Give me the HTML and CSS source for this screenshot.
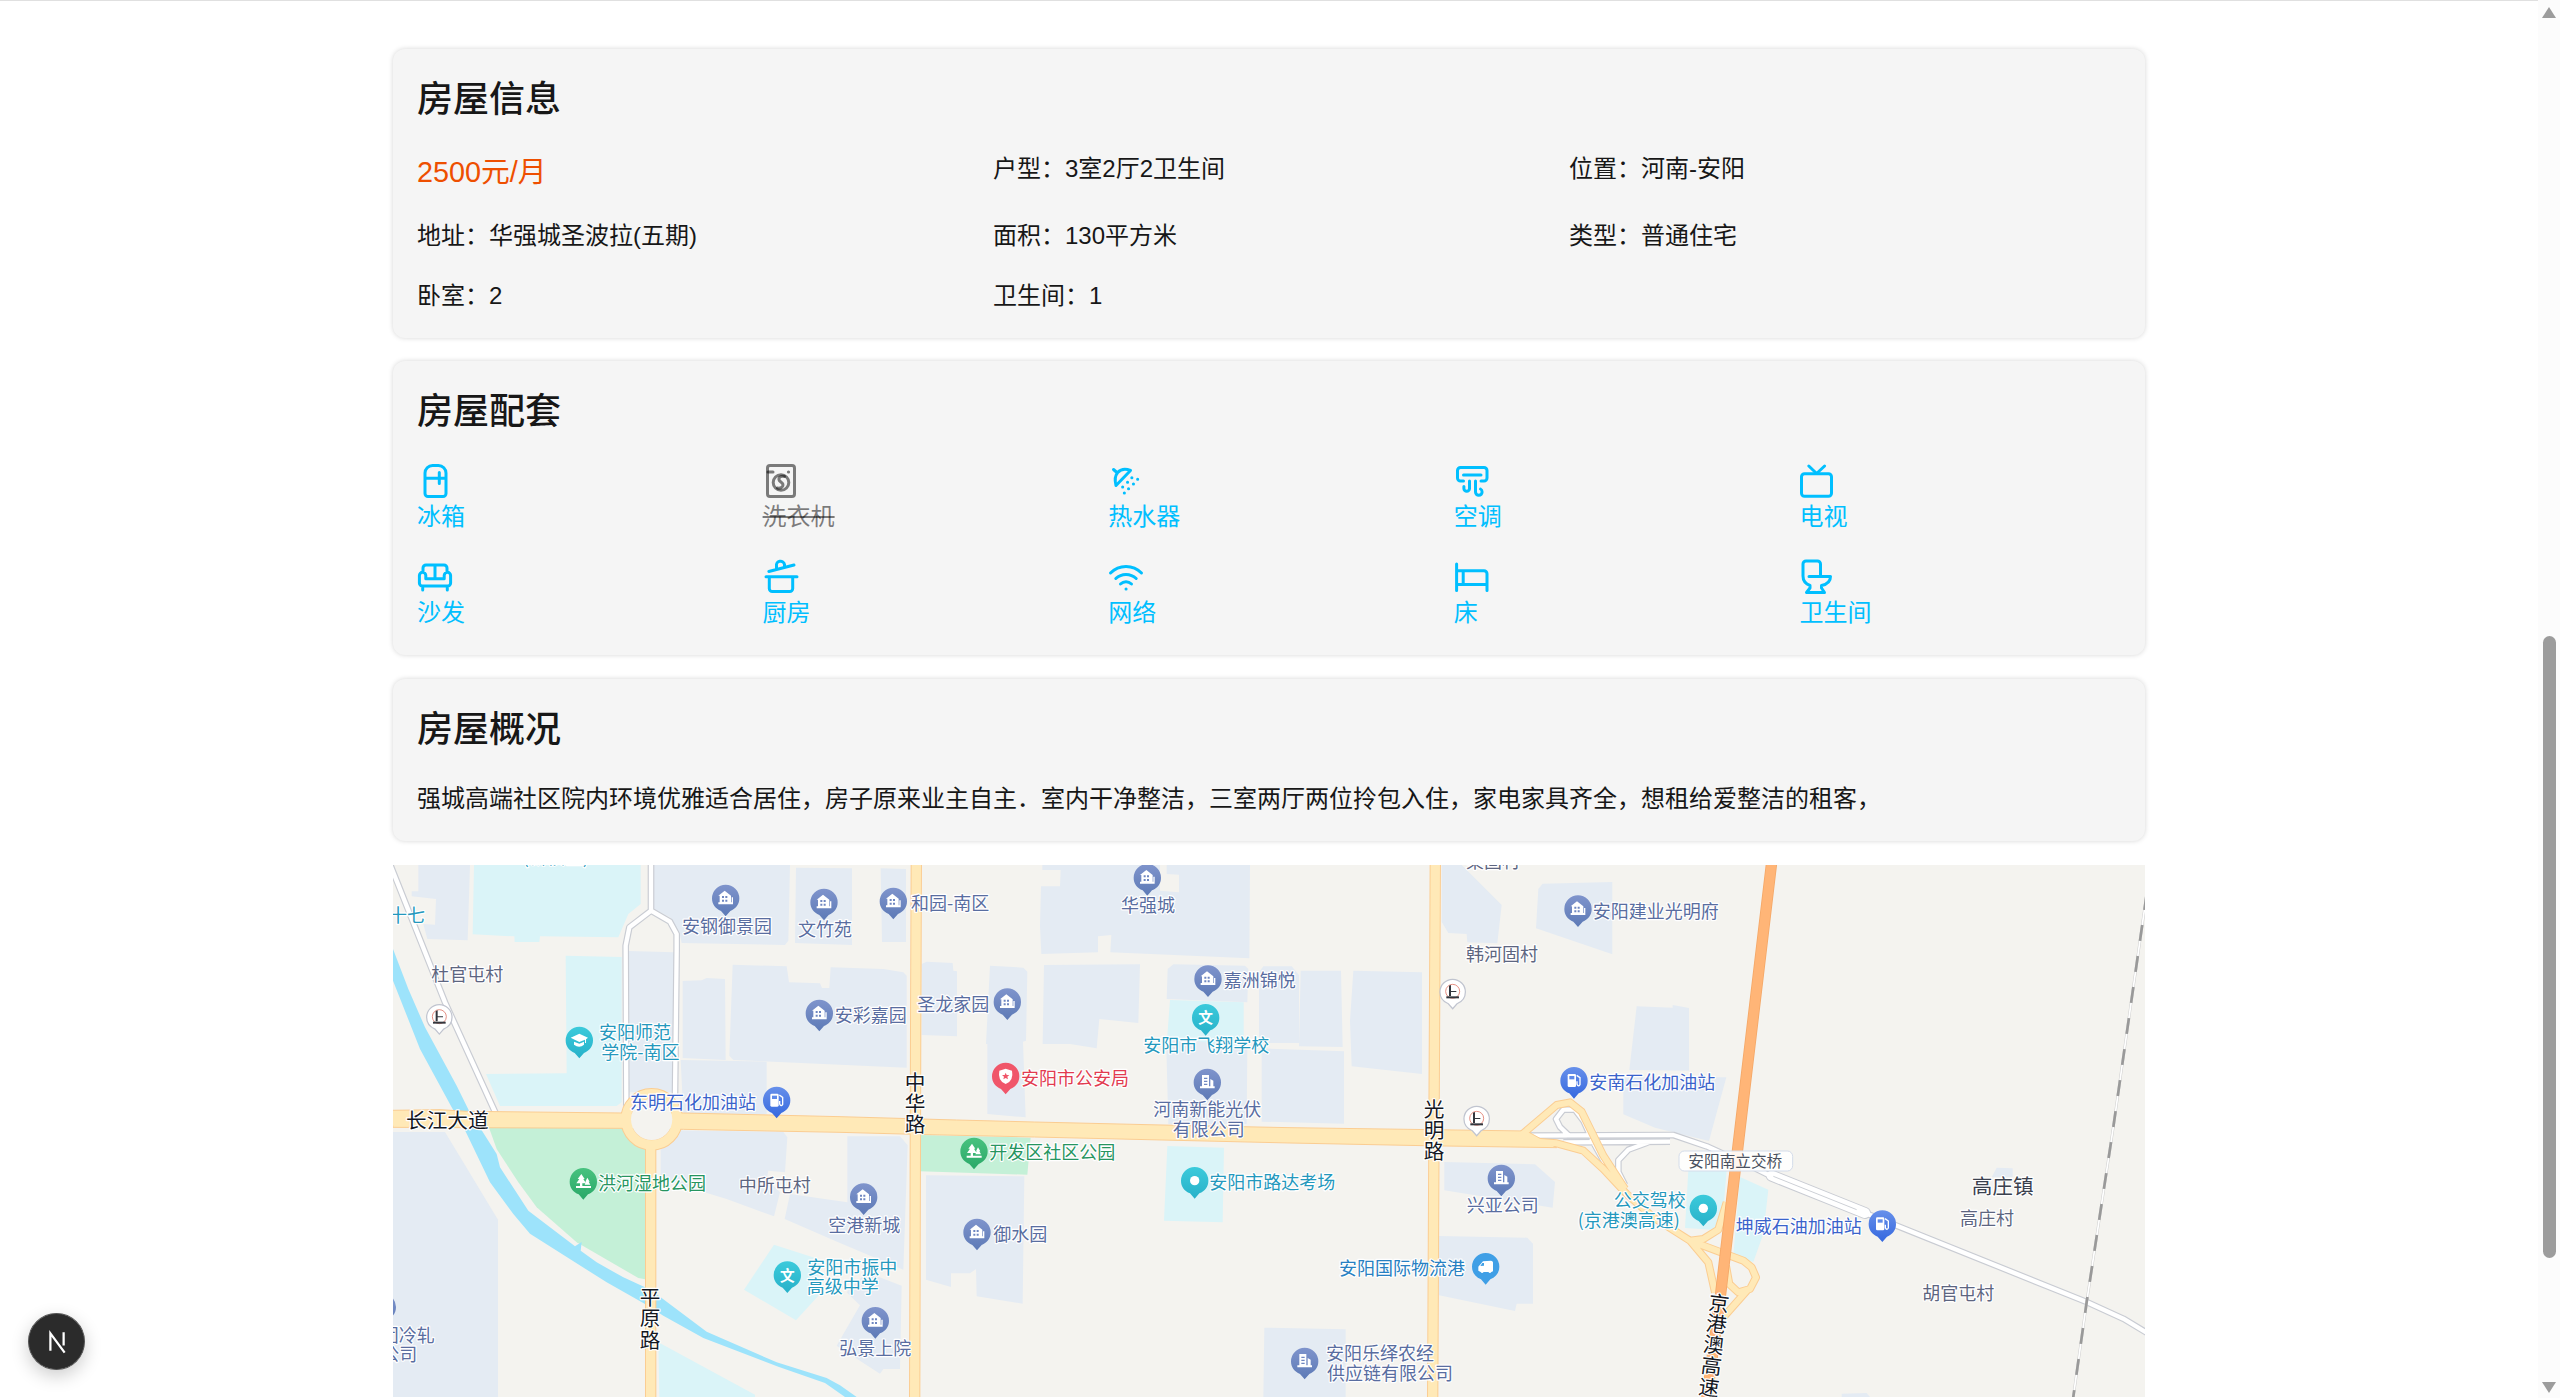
FILE: index.html
```html
<!DOCTYPE html>
<html lang="zh-CN">
<head>
<meta charset="utf-8">
<title>房屋信息</title>
<link rel="stylesheet" href="styles.css">
</head>
<body>
<div class="window">
<div class="page">
<main class="content">
  <section class="card">
    <h2 class="card-title">房屋信息</h2>
    <div class="info-grid">
      <div class="price">2500元/月</div>
      <div>户型：3室2厅2卫生间</div>
      <div>位置：河南-安阳</div>
      <div>地址：华强城圣波拉(五期)</div>
      <div>面积：130平方米</div>
      <div>类型：普通住宅</div>
      <div>卧室：2</div>
      <div>卫生间：1</div>
    </div>
  </section>

  <section class="card">
    <h2 class="card-title">房屋配套</h2>
    <div class="facility-grid">
      <div class="facility"><svg class="icon" viewBox="0 0 36 36"><path d="M8 10a7.500 7.500 0 0 1 7.500-7.500h6a7.500 7.500 0 0 1 7.500 7.500v20.500a3 3 0 0 1-3 3h-15a3 3 0 0 1-3-3zM8 15.300h21M22.300 9.500v11"/></svg><span>冰箱</span></div>
      <div class="facility missing"><svg class="icon" viewBox="0 0 36 36"><rect x="4.500" y="2.500" width="27" height="31" rx="2.500"/><circle cx="18" cy="19.500" r="7.800"/><path d="M5 9h5M25.400 9h.2"/><path d="M21.500 13.500c-3-1-6 .5-5.500 3.200c.4 2.300 4 2.600 4 5.300c0 2.500-3 3.500-5.500 3"/></svg><span>洗衣机</span></div>
      <div class="facility"><svg class="icon" viewBox="0 0 36 36"><path d="M5.500 6.500l4 3.500M22.500 7.500L8 22.500M22.500 7.500c-5-2-10-1-12.800 2c-2.600 3-3 8-1.700 13M23.800 14.700h.1M29.600 16.300h.1M19.500 19.300h.1M25.400 21h.1M14.600 24h.1M20.500 25.700h.1M16.300 30h.1"/></svg><span>热水器</span></div>
      <div class="facility"><svg class="icon" viewBox="0 0 36 36"><path d="M9.500 18H6.500a3 3 0 0 1-3-3V7.500a3 3 0 0 1 3-3h23.500a3 3 0 0 1 3 3V15a3 3 0 0 1-3 3h-3M9.500 12h17.500M15.500 18v7.500a2.800 2.800 0 0 1-5.600 0v-2M21.500 18v11a3.300 3.300 0 0 0 6.600 0c0-1.500-.5-2.500-1.600-3"/></svg><span>空调</span></div>
      <div class="facility"><svg class="icon" viewBox="0 0 36 36"><rect x="2.500" y="10.800" width="30" height="22.500" rx="3"/><path d="M9.800 3l7.800 7.500L25.600 3"/></svg><span>电视</span></div>
      <div class="facility"><svg class="icon" viewBox="0 0 36 36"><path d="M6 13V9a3 3 0 0 1 3-3h18a3 3 0 0 1 3 3v4M18 6v13.500M2.400 16.500a3.200 3.200 0 0 1 6.400 0v3.200h18.400v-3.200a3.200 3.200 0 0 1 6.400 0V24a3 3 0 0 1-3 3H5.400a3 3 0 0 1-3-3zM5.700 27v4M30.300 27v4"/></svg><span>沙发</span></div>
      <div class="facility"><svg class="icon" viewBox="0 0 36 36"><path d="M3 17.700h31M6.300 18v11.500a3 3 0 0 0 3 3h17.400a3 3 0 0 0 3-3V18M5.800 12.500L31 6M13.500 10V7a4 4 0 0 1 8-1.500V8"/></svg><span>厨房</span></div>
      <div class="facility"><svg class="icon" viewBox="0 0 36 36"><path d="M2.500 14c8.500-8.800 22.500-8.800 31 0M7.800 19.500c5.700-5.500 14.700-5.500 20.400 0M12.500 25c3.200-3 7.800-3 11 0M18 30h.1"/></svg><span>网络</span></div>
      <div class="facility"><svg class="icon" viewBox="0 0 36 36"><path d="M2.600 5v26.500M2.600 11.700h27.400a3 3 0 0 1 3 3v16.800M2.600 25.500H33M9.200 12v13"/></svg><span>床</span></div>
      <div class="facility"><svg class="icon" viewBox="0 0 36 36"><path d="M21.500 17V5a3 3 0 0 0-3-3H7a3 3 0 0 0-3 3v12c0 5 3 8 7 9.500v2.500l-3.500 4.500h18l-3-4.500v-2.500c5-1 9-4 9-9H10"/></svg><span>卫生间</span></div>
    </div>
  </section>

  <section class="card">
    <h2 class="card-title">房屋概况</h2>
    <p class="summary">强城高端社区院内环境优雅适合居住，房子原来业主自主．室内干净整洁，三室两厅两位拎包入住，家电家具齐全，想租给爱整洁的租客，</p>
  </section>

  <svg class="map" viewBox="9 18 5256 1596">
    <defs>
      <linearGradient id="g-home" x1="0" y1="0" x2="0" y2="1"><stop offset="0" stop-color="#7f94cc"/><stop offset="1" stop-color="#5d7ab6"/></linearGradient>
      <linearGradient id="g-edu" x1="0" y1="0" x2="0" y2="1"><stop offset="0" stop-color="#3bcadb"/><stop offset="1" stop-color="#27b1c9"/></linearGradient>
      <linearGradient id="g-gas" x1="0" y1="0" x2="0" y2="1"><stop offset="0" stop-color="#6790ea"/><stop offset="1" stop-color="#3568df"/></linearGradient>
      <linearGradient id="g-park" x1="0" y1="0" x2="0" y2="1"><stop offset="0" stop-color="#48c27f"/><stop offset="1" stop-color="#2aa868"/></linearGradient>
      <path id="pin" d="M-41 0a41 41 0 1 1 82 0c0 18-10 31-27 38L0 54l-14-16c-17-7-27-20-27-38z"/>
      <g id="home"><use href="#pin" fill="url(#g-home)"/><path fill="#fff" d="M-22-8L-3-23L16-8V12H18V-3H22V18H-22V12H-18V-8z"/><path fill="#6f87c1" d="M-11-7h6v6h-6zM-1-7h6v6h-6zM-11 4h6v6h-6zM-1 4h6v6h-6z"/></g>
      <g id="office"><use href="#pin" fill="url(#g-home)"/><path fill="#fff" d="M-16-22H5V12H9V-10L18-5V12H22V18H-22V12H-16z"/><path stroke="#6f87c1" stroke-width="4" d="M-10-12H0M-10-3H0M-10 6H0" fill="none"/></g>
      <g id="cap"><use href="#pin" fill="url(#g-edu)"/><path fill="#fff" d="M-26-8L0-20L26-8L20-3V8H17V-2L0 5zM-16 4L0 10L14 4V13Q0 25-16 13z"/></g>
      <g id="school"><use href="#pin" fill="url(#g-edu)"/><text class="glyph" x="-22" y="17">文</text></g>
      <g id="spot"><use href="#pin" fill="url(#g-edu)"/><circle r="14" fill="#fff"/></g>
      <g id="gas"><use href="#pin" fill="url(#g-gas)"/><rect x="-19" y="-20" width="25" height="39" rx="4" fill="#fff"/><path fill="#5f8ae8" d="M-14-14H1V-4h-15z"/><path d="M8-16l10 7V12q-5 8-9-1V2" fill="none" stroke="#fff" stroke-width="4"/></g>
      <g id="park"><use href="#pin" fill="url(#g-park)"/><path fill="#fff" d="M-6-23l10 15h-4l8 13H-3v8H23v6H-22v-6h12V5h-11l9-13h-5zM12-12l7 12h-3l5 9H4l4-9H6z"/></g>
      <g id="police"><use href="#pin" fill="#f0566a"/><path fill="#fff" d="M0-23l19 6Q25 13 0 23Q-25 13-19-17z"/><path fill="#f0566a" d="M0-11l3 7h8l-6 5l2 8l-7-4l-7 4l2-8l-6-5h8z"/></g>
      <g id="truck"><use href="#pin" fill="#3f9fe6"/><path fill="#fff" d="M-8-16l24-2q5 0 6 5v27l-5 2q-4 6-9 0H-6q-5 6-9 0l-7-4V0z"/><path fill="#3f9fe6" d="M-16-2l6-9h5v8z"/></g>
      <g id="brand"><use href="#pin" fill="#fff" stroke="#c0c4cf" stroke-width="4" transform="scale(.93)"/><circle r="21" cy="-2" fill="none" stroke="#e0796b" stroke-width="2.500"/><path fill="#33363d" d="M-11-19l6-2V12h-6zM-5-3h16v3H-5z"/><path fill="#33363d" d="M-19 13h38v6h-38z"/></g>
    </defs>

    <rect x="0" y="0" width="5280" height="1620" fill="#f4f3ef"/>

    <g fill="#e4ebf3">
      <path d="M85 18H240L233 244L112 240L100 195L135 197L138 120L65 112V97H85z"/>
      <path d="M790 18H1200L1195 245L1185 258L875 252L868 220L840 175L790 150z"/>
      <path d="M1218 26L1386 28V258L1215 252z"/>
      <path d="M716 276L852 280L855 700H716z"/>
      <path d="M878 366L935 364L950 357L1005 360L1007 603L878 597z"/>
      <path d="M1028 317L1190 322L1197 370L1290 373L1296 387H1318L1322 325L1480 330L1540 340L1550 350V626L1350 617L1030 603L1018 590z"/>
      <path d="M872 603L1130 608V766H880z"/>
      <path d="M1472 28L1548 30V249H1476z"/>
      <path d="M1957 18V33H2012L2010 82H1953L1950 200L1954 285L2124 280V232L2164 228L2161 280L2578 298L2580 18H2330V45L2367 47V100L2310 95V18z"/>
      <path d="M1595 315L1610 308L1688 312L1690 335L1701 337V532L1595 528z"/>
      <path d="M1800 320L1900 326L1912 338L1908 545L1899 548L1907 775L1792 765V555H1788z"/>
      <path d="M1962 318L2250 316L2245 492L2128 480L2120 568L2040 555H1958z"/>
      <path d="M2333 330L2350 316L2565 320L2575 330L2572 430L2330 420z"/>
      <path d="M2328 530L2572 565L2570 795H2335z"/>
      <path d="M2607 340L2620 322H2705L2727 348V552H2607z"/>
      <path d="M2615 568L2862 577V794L2615 788z"/>
      <path d="M3155 18H3215L3335 138L3322 253L3232 250L3230 225L3175 222L3155 188z"/>
      <path d="M3445 90L3458 74L3667 69V286L3438 208z"/>
      <path d="M2732 335H2853L2858 564L2727 562z"/>
      <path d="M2890 335L3096 340V645L2885 622L2880 485z"/>
      <path d="M3740 442L3848 446V438L3897 447V635L3718 633z"/>
      <path d="M3700 655H4009L3957 846L3795 806L3700 766z"/>
      <path d="M9 819H165L324 1082V1614H9z"/>
      <path d="M812 814L1180 818L1192 835L1185 940L1135 935L1130 960L1170 1000L1152 1072L1010 1020L812 960z"/>
      <path d="M1372 832H1530L1553 859L1540 1232L1350 1152L1184 1080L1200 1005L1372 1030z"/>
      <path d="M1370 1300L1410 1339L1358 1429L1340 1460L1470 1544L1480 1530H1530L1535 1280L1430 1240z"/>
      <path d="M1608 949L1903 952L1898 1334L1760 1312L1758 1230L1740 1243H1683V1284L1608 1262z"/>
      <path d="M2623 1406L2867 1411V1614H2620z"/>
      <path d="M3163 909L3435 916L3495 969L3488 1046L3163 994z"/>
      <path d="M3147 1131L3412 1136L3429 1154V1334H3380L3375 1356L3147 1309z"/>
      <path d="M4820 926L4868 928V955H4805z"/>
      <path d="M4355 1604L4430 1602L4440 1614H4355z"/>
    </g>

    <g fill="#daf4f8">
      <path d="M252 18H752V135L715 165L685 235L450 232L448 249H374L373 232L248 226z"/>
      <path d="M527 290L695 294V730L680 741H330L288 645L530 643z"/>
      <path d="M2340 423L2561 430V570L2332 530z"/>
      <path d="M1152 1157L1285 1200V1310L1218 1384L1062 1292z"/>
      <path d="M805 1450L1095 1607V1614H808z"/>
      <path d="M2332 861L2502 866L2498 1090L2322 1085z"/>
      <path d="M3895 934H4010L3995 1114L3885 1107z"/>
      <path d="M4050 954L4135 992L4120 1124L4090 1209L4030 1189z"/>
    </g>

    <g fill="#c4f0d7">
      <path d="M295 800H765V1261L745 1257L560 1150L440 1045L385 970L320 870z"/>
      <path d="M1590 828L1922 836L1912 947L1590 937z"/>
    </g>

    <path fill="#9de3fb" d="M9 270L55 390L105 505L200 680L237 755L275 814L320 885L330 925L415 1055L555 1162L575 1149L572 1175L620 1210L700 1255L765 1285L800 1306L950 1418L1160 1510L1310 1557L1350 1579L1400 1614H1365L1305 1572L1165 1523L940 1437L820 1370L765 1335L650 1270L420 1124L370 1065L300 970L225 814L185 745L90 570L9 365z"/>

    <g class="lane">
      <path class="lane-edge" d="M783 0V155L718 205L707 260L709 740M783 155L840 188L860 225V270L855 710M0 15L165 430L318 765"/>
      <path class="lane-fill" d="M783 0V155L718 205L707 260L709 740M783 155L840 188L860 225V270L855 710M0 15L165 430L318 765"/>
      <path class="lane-edge" d="M3400 830L3850 828L3950 862L4100 930L4150 955M4420 1060L5090 1329L5200 1379L5275 1424M3520 850L3840 848M3660 940L3610 850L3580 785L3555 752H3520L3498 780L3510 804L3535 828M3780 848L3715 872L3685 904V939L3705 978"/>
      <path class="lane-edge wide" d="M4145 950L4425 1062"/>
      <path class="lane-fill" d="M3400 830L3850 828L3950 862L4100 930L4150 955M4420 1060L5090 1329L5200 1379L5275 1424M3520 850L3840 848M3660 940L3610 850L3580 785L3555 752H3520L3498 780L3510 804L3535 828M3780 848L3715 872L3685 904V939L3705 978"/>
      <path class="lane-fill wide" d="M4145 950L4425 1062"/>
      <path d="M4150 952L4400 1052M3530 838H3830" fill="none" stroke="#cdd0d6" stroke-width="3"/>
    </g>

    <g class="road">
      <g class="road-edge">
        <path d="M782 850V1620M1579 0L1577 500L1574 1620M3136 0L3132 800L3128 1620"/>
        <path class="ramp" d="M3380 840L3500 738L3540 730L3575 758L3640 890L3705 990M3400 845L3500 853L3580 875L3640 930L3710 1005L3790 1075L3900 1145L4060 1205L4085 1225L4098 1255L4080 1290L4045 1300L4018 1275L4008 1220M4075 1290L4000 1375M3900 1145L3955 1210L3975 1300M3900 1145L3940 1140L3985 1112L4010 1030"/>
        <ellipse cx="785" cy="781" rx="77" ry="77" class="ring"/>
      </g>
      <path class="avenue" d="M0 754L150 752L230 757L700 762H880L1350 773L1700 783L1933 789L2400 800L2700 806L3410 816L3500 866L3100 860L2700 852L1933 834L1575 826L1350 820L880 811L700 808L9 805z"/>
      <g class="road-fill">
        <path d="M782 860V1620M1579 0L1577 500L1574 1620M3136 0L3132 800L3128 1620"/>
        <path class="ramp" d="M3380 840L3500 738L3540 730L3575 758L3640 890L3705 990M3400 845L3500 853L3580 875L3640 930L3710 1005L3790 1075L3900 1145L4060 1205L4085 1225L4098 1255L4080 1290L4045 1300L4018 1275L4008 1220M4075 1290L4000 1375M3900 1145L3955 1210L3975 1300M3900 1145L3940 1140L3985 1112L4010 1030"/>
        <ellipse cx="785" cy="781" rx="77" ry="77" class="ring"/>
      </g>
      <circle cx="785" cy="781" r="62" fill="#f4f3ef"/>
    </g>

    <path class="highway-edge" d="M4145 10L4050 810L3992 1304L3950 1620"/>
    <path class="highway" d="M4145 10L4050 810L3992 1304L3950 1620"/>
    <path d="M5270 105L5170 804L5090 1329L5049 1620" fill="none" stroke="#cfcfcf" stroke-width="8"/>
    <path d="M5270 105L5170 804L5090 1329L5049 1620" fill="none" stroke="#fff" stroke-width="5"/>
    <path d="M5270 105L5170 804L5090 1329L5049 1620" fill="none" stroke="#999" stroke-width="8" stroke-dasharray="48 46"/>

    <rect x="3867" y="876" width="341" height="60" rx="16" fill="#fff" fill-opacity=".88" stroke="#d4dcea" stroke-width="3"/>

    <g class="pins">
      <use href="#home" x="1007" y="118"/><use href="#home" x="1302" y="130"/><use href="#home" x="1288" y="463"/>
      <use href="#home" x="1510" y="127"/><use href="#home" x="2272" y="56"/><use href="#home" x="1852" y="429"/>
      <use href="#home" x="2454" y="360"/><use href="#home" x="3564" y="150"/><use href="#home" x="1421" y="1014"/>
      <use href="#home" x="1761" y="1120"/><use href="#home" x="1456" y="1385"/>
      <use href="#office" x="2452" y="670"/><use href="#office" x="3334" y="958"/><use href="#office" x="2744" y="1507"/><use href="#office" x="-23" y="1344"/>
      <use href="#cap" x="568" y="544"/><use href="#school" x="2447" y="476"/><use href="#school" x="1192" y="1248"/>
      <use href="#spot" x="2414" y="965"/><use href="#spot" x="3940" y="1048"/>
      <use href="#gas" x="1160" y="724"/><use href="#gas" x="3552" y="665"/><use href="#gas" x="4477" y="1095"/>
      <use href="#police" x="1847" y="652"/><use href="#park" x="580" y="968"/><use href="#park" x="1752" y="877"/>
      <use href="#truck" x="3287" y="1223"/>
      <use href="#brand" x="148" y="475"/><use href="#brand" x="3188" y="399"/><use href="#brand" x="3260" y="780"/>
    </g>

    <g class="label estate">
      <text x="876" y="222">安钢御景园</text><text x="1224" y="232">文竹苑</text><text x="1563" y="152">和园-南区</text>
      <text x="1334" y="489">安彩嘉园</text><text x="1582" y="455">圣龙家园</text><text x="2193" y="159">华强城</text>
      <text x="2501" y="385">嘉洲锦悦</text><text x="2290" y="772">河南新能光伏</text><text x="2348" y="832">有限公司</text>
      <text x="3608" y="176">安阳建业光明府</text><text x="1315" y="1119">空港新城</text><text x="-28" y="1448">团冷轧</text>
      <text x="-26" y="1507">公司</text><text x="1810" y="1146">御水园</text><text x="1348" y="1488">弘景上院</text>
      <text x="3230" y="1059">兴亚公司</text><text x="2808" y="1504">安阳乐绎农经</text><text x="2811" y="1563">供应链有限公司</text>
    </g>
    <g class="label village">
      <text x="124" y="367">杜官屯村</text><text x="3228" y="305">韩河固村</text><text x="3228" y="27">栗固村</text>
      <text x="1046" y="999">中所屯村</text><text x="4710" y="1098">高庄村</text><text x="4597" y="1323">胡官屯村</text>
    </g>
    <g class="label teach">
      <text x="-3" y="188">十七</text><text x="398" y="16">(新校区)</text><text x="627" y="541">安阳师范</text><text x="634" y="600">学院-南区</text>
      <text x="2260" y="580">安阳市飞翔学校</text><text x="1252" y="1244">安阳市振中</text><text x="1250" y="1303">高级中学</text>
      <text x="2458" y="991">安阳市路达考场</text><text x="3671" y="1044">公交驾校</text><text x="3563" y="1103">(京港澳高速)</text>
    </g>
    <g class="label fuel"><text x="720" y="749">东明石化加油站</text><text x="3598" y="690">安南石化加油站</text><text x="4037" y="1121">坤威石油加油站</text></g>
    <text class="label port" x="2847" y="1248">安阳国际物流港</text>
    <text class="label police" x="1893" y="678">安阳市公安局</text>
    <g class="label green"><text x="624" y="994">洪河湿地公园</text><text x="1798" y="901">开发区社区公园</text></g>
    <text class="label bridge" x="3895" y="925">安阳南立交桥</text>
    <text class="label town" x="4745" y="1005">高庄镇</text>
    <g class="label street">
      <text x="48" y="807">长江大道</text>
      <text x="1544" y="694">中</text><text x="1544" y="757">华</text><text x="1544" y="819">路</text>
      <text x="3101" y="773">光</text><text x="3101" y="836">明</text><text x="3101" y="899">路</text>
      <text x="749" y="1338">平</text><text x="749" y="1402">原</text><text x="749" y="1466">路</text>
      <text transform="translate(3987 1334) rotate(7)" x="-31" y="22">京</text>
      <text transform="translate(3979 1396) rotate(7)" x="-31" y="22">港</text>
      <text transform="translate(3971 1459) rotate(7)" x="-31" y="22">澳</text>
      <text transform="translate(3964 1522) rotate(7)" x="-31" y="22">高</text>
      <text transform="translate(3957 1586) rotate(7)" x="-31" y="22">速</text>
    </g>
  </svg>
</main>
</div>
<div class="scrollbar">
  <span class="arrow up"></span>
  <span class="thumb"></span>
  <span class="arrow down"></span>
</div>
<div class="dev-badge"><svg viewBox="0 0 56 56"><circle cx="28" cy="28" r="27.500" fill="#2b2b2b" stroke="#555"/><path d="M22 37V20L36 39M35 19v13" fill="none" stroke="#fff" stroke-width="2.200"/></svg></div>
</div>
</body>
</html>
```
FILE: styles.css
```css
* { box-sizing: border-box; }

body {
  margin: 0;
  background: #fff;
  color: #171717;
  font-family: "Liberation Sans", "Noto Sans CJK SC", sans-serif;
  font-size: 24px;
  line-height: 36px;
}

.window {
  position: relative;
  display: flex;
  height: 1398px;
  overflow: hidden;
}

.page {
  flex: 1;
  border-top: 1px solid #e0e0e0;
  padding-top: 47.6px;
}

.content {
  display: flex;
  flex-direction: column;
  gap: 23.7px;
  width: 1752px;
  margin: 0 auto;
}

.card {
  padding: 24px;
  border-radius: 12px;
  background: #f5f5f5;
  box-shadow: 0 0 5px rgba(0, 0, 0, .17);
}

.card-title {
  margin: 0 0 24px;
  font-size: 36px;
  line-height: 54px;
  font-weight: 500;
}

.info-grid {
  display: grid;
  grid-template-columns: repeat(3, 1fr);
  gap: 24px;
}

.price {
  color: #ee4f00;
  font-size: 28.8px;
  line-height: 43px;
}

.facility-grid {
  display: grid;
  grid-template-columns: repeat(5, 1fr);
  gap: 24px;
}

.facility {
  display: flex;
  flex-direction: column;
  color: #00bfff;
}

.facility.missing {
  color: rgba(0, 0, 0, .5);
  text-decoration: line-through;
}

.icon {
  display: block;
  width: 36px;
  height: 36px;
  fill: none;
  stroke: currentColor;
  stroke-width: 3;
  stroke-linecap: round;
  stroke-linejoin: round;
}

.summary { margin: 0; }

.map {
  display: block;
  width: 1752px;
  height: 532px;
  overflow: hidden;
}

.lane path { fill: none; stroke-linejoin: round; }
.lane .lane-edge { stroke: #c9ccd3; stroke-width: 20; }
.lane .lane-fill { stroke: #fff; stroke-width: 13; }
.lane .lane-edge.wide { stroke-width: 36; stroke-linecap: round; }
.lane .lane-fill.wide { stroke-width: 30; stroke-linecap: round; }

.road-edge, .road-fill { fill: none; stroke-linejoin: round; }
.road-edge { stroke: #fbcd92; stroke-width: 34; }
.road-fill { stroke: #ffe9b7; stroke-width: 28; }
.road-edge .ramp { stroke-width: 24; }
.road-fill .ramp { stroke-width: 18; }
.avenue { fill: #ffe9b7; stroke: #fbcd92; stroke-width: 3; }

.highway, .highway-edge { fill: none; }
.highway-edge { stroke: #f5a868; stroke-width: 34; }
.highway { stroke: #ffb577; stroke-width: 29; }

.glyph {
  font: 700 44px "Noto Sans CJK SC", sans-serif;
  fill: #fff;
}

.label {
  font-family: "Noto Sans CJK SC", sans-serif;
  font-size: 54px;
  stroke: #fff;
  stroke-width: 7px;
  stroke-linejoin: round;
  paint-order: stroke;
}

.estate { fill: #596da0; }
.village { fill: #5d6580; }
.teach { fill: #2498bd; }
.fuel { fill: #3a63cb; }
.port { fill: #2780c2; }
.police { fill: #e23b50; }
.green { fill: #26955f; }
.bridge { fill: #4a5160; font-size: 47px; stroke: none; }
.town { fill: #3b414e; font-size: 62px; }
.street { fill: #14181f; font-size: 62px; }

.scrollbar {
  display: flex;
  flex-direction: column;
  align-items: center;
  width: 22px;
  padding: 7px 0 5px;
  background: #fcfcfc;
}

.thumb {
  width: 13px;
  height: 622px;
  margin-top: 618px;
  border-radius: 7px;
  background: #9c9c9c;
}

.arrow {
  border: 7px solid transparent;
  border-top: 0;
  border-bottom: 11px solid #9c9c9c;
}

.arrow.down {
  margin-top: auto;
  transform: rotate(180deg);
}

.dev-badge {
  position: absolute;
  left: 28px;
  bottom: 28px;
  width: 57px;
  height: 57px;
  border-radius: 50%;
  box-shadow: 0 6px 18px rgba(0, 0, 0, .2);
}

.dev-badge svg { display: block; }
```
